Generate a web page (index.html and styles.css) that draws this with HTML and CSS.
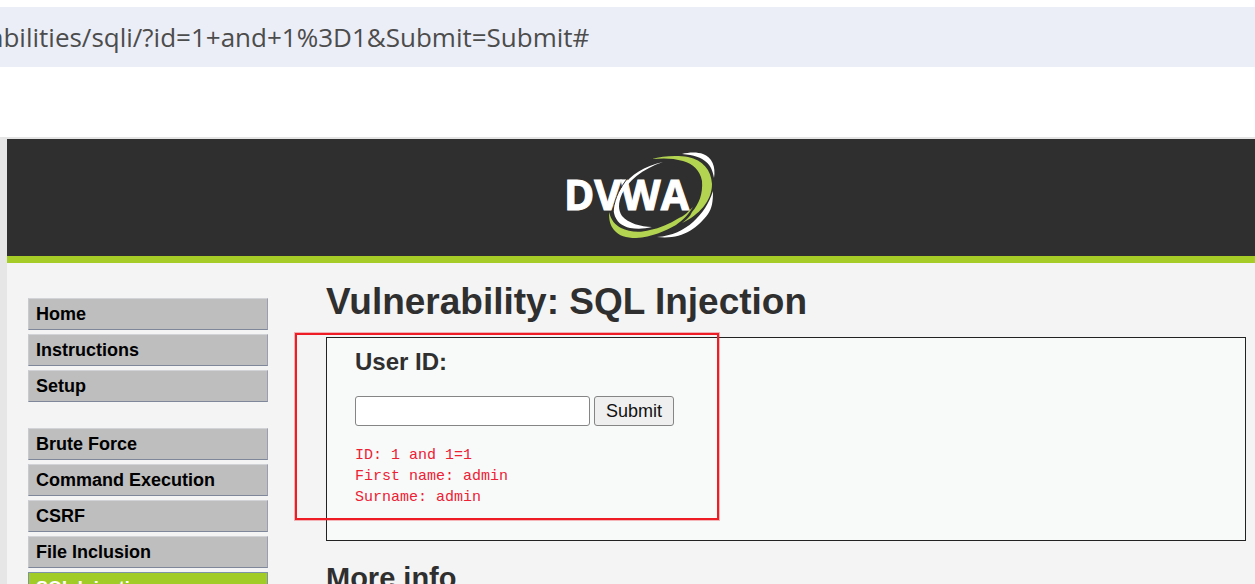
FILE: index.html
```html
<!DOCTYPE html>
<html lang="en">
<head>
<meta charset="utf-8">
<title>Vulnerability: SQL Injection</title>
<link rel="stylesheet" href="styles.css">
</head>
<body>
<div class="toolbar">
  <input class="address" type="text" aria-label="Address" value="abilities/sqli/?id=1+and+1%3D1&amp;Submit=Submit#">
</div>
<div class="page">
  <header class="header">
    <svg class="logo" viewBox="0 0 154 90" role="img" aria-label="DVWA">
      <path class="logo-green" d="M45 62C45 70 46 75 50 80C55 86 62 88 72 88C88 87 101 81 112 75C119 70 124 65 129 57C124 62 120 66 115 68C105 74 96 78 86 80C76 83 65 82 57 78C51 75 47 70 45 62Z"/>
      <path class="logo-white" d="M99 12C80 16 67 25 58 37C52 45 48 53 50 63C52 72 58 76 66 78C73 79 80 79 88 77C77 77 64 73 58 66C54 60 54 53 58 44C64 31 78 19 99 12Z"/>
      <text class="logo-text" x="0" y="60">DVWA</text>
      <path class="logo-gap" d="M63 29C57 37 51 46 49 61"/>
      <path class="logo-green" d="M88 9C98 6 113 5 124 7C139 10 147 20 148 34C148 51 135 65 118 73C122 70 126 67 128 62C135 54 139 44 138 31C136 20 129 14 119 11C109 8 99 8 88 9Z"/>
      <path class="logo-white" d="M118 4C125 2 134 2 139 4C148 7 152 17 150 28C148 15 142 6 118 4Z"/>
      <path class="logo-white" d="M149 41C149 52 148 58 144 64C133 79 117 90 93 87C108 86 120 80 129 72C139 63 145 53 149 41Z"/>
    </svg>
  </header>
  <div class="columns">
    <nav class="menu">
      <ul class="menu-group">
        <li><a class="menu-item" href="#">Home</a></li>
        <li><a class="menu-item" href="#">Instructions</a></li>
        <li><a class="menu-item" href="#">Setup</a></li>
      </ul>
      <ul class="menu-group">
        <li><a class="menu-item" href="#">Brute Force</a></li>
        <li><a class="menu-item" href="#">Command Execution</a></li>
        <li><a class="menu-item" href="#">CSRF</a></li>
        <li><a class="menu-item" href="#">File Inclusion</a></li>
        <li><a class="menu-item selected" href="#">SQL Injection</a></li>
      </ul>
    </nav>
    <main class="content">
      <h1>Vulnerability: SQL Injection</h1>
      <section class="panel">
        <h3><label for="user-id">User ID:</label></h3>
        <form class="query">
          <input class="user-id" id="user-id" type="text">
          <button class="submit" type="button">Submit</button>
        </form>
        <pre class="result">ID: 1 and 1=1
First name: admin
Surname: admin</pre>
        <div class="highlight"></div>
      </section>
      <h2>More info</h2>
    </main>
  </div>
</div>
</body>
</html>
```
FILE: styles.css
```css
* {
  box-sizing: border-box;
}

body {
  margin: 0;
  height: 100vh;
  overflow: hidden;
  background: #fff;
  color: #2f2f2f;
  font-family: "Liberation Sans", Arial, sans-serif;
}

.toolbar {
  padding: 7px 0 70px;
}

.address {
  display: block;
  width: 100%;
  height: 60px;
  padding: 0;
  border: 0;
  background: #ebeef6;
  color: #4c4c4c;
  font: 26px "Open Sans", "Noto Sans", sans-serif;
  text-indent: -11px;
}

.page {
  border-top: 2px solid #e4e4e4;
  border-left: 7px solid #e6e6e6;
  background: #f4f4f4;
}

.header {
  display: flex;
  justify-content: center;
  padding: 11px 0 16px 20px;
  border-bottom: 7px solid #a6cc28;
  background: #2f2f2f;
}

.logo {
  width: 154px;
  height: 90px;
}

.logo-text {
  fill: #fff;
  stroke: #fff;
  stroke-width: 1;
  font: bold 41px "Open Sans", "Noto Sans", sans-serif;
}

.logo-white {
  fill: #fff;
}

.logo-green {
  fill: #b3d450;
}

.logo-gap {
  fill: none;
  stroke: #2f2f2f;
  stroke-width: 1;
}

.columns {
  display: flex;
  gap: 58px;
  padding: 0 9px 0 21px;
}

.menu {
  display: flex;
  flex: 0 0 240px;
  flex-direction: column;
  gap: 26px;
  padding-top: 35px;
}

.menu-group {
  display: flex;
  flex-direction: column;
  gap: 4px;
  margin: 0;
  padding: 0;
  list-style: none;
}

.menu-item {
  display: block;
  padding: 5px 7px;
  border: 1px solid;
  border-color: #d2d3d6 #9a9fb0 #7f879b #c8cad0;
  background: #bebebe;
  color: #000;
  font-size: 18px;
  font-weight: bold;
  line-height: 20px;
  text-decoration: none;
}

.menu-item.selected {
  border-color: #7f93a8;
  background: #a1cc28;
  color: #fff;
}

.content {
  flex: 1;
  padding-top: 17px;
}

h1,
h2,
h3 {
  margin: 0;
}

h1 {
  font-size: 37px;
  line-height: 44px;
}

h2 {
  margin-top: 19px;
  font-size: 29px;
  line-height: 36px;
}

h3 {
  font-size: 24px;
  line-height: 28px;
}

.panel {
  position: relative;
  margin-top: 13px;
  padding: 10px 28px 32px;
  border: 1px solid #222;
  background: #f8faf9;
}

.query {
  display: flex;
  gap: 4px;
  margin-top: 20px;
}

.user-id,
.submit {
  height: 30px;
  border: 1px solid #858585;
  border-radius: 3px;
  font: 18px "Liberation Sans", Arial, sans-serif;
}

.user-id {
  width: 235px;
  background: #fff;
}

.submit {
  padding: 0 11px;
  background: #efefef;
  color: #111;
}

.result {
  margin: 19px 0 0;
  color: #ee2034;
  font: 15px/21px "Liberation Mono", monospace;
}

.highlight {
  position: absolute;
  top: -5px;
  left: -32px;
  width: 424px;
  height: 187px;
  border: 2px solid #ee1c25;
  box-shadow: 0 0 0 1px rgba(238, 28, 37, 0.3);
  pointer-events: none;
}
```
